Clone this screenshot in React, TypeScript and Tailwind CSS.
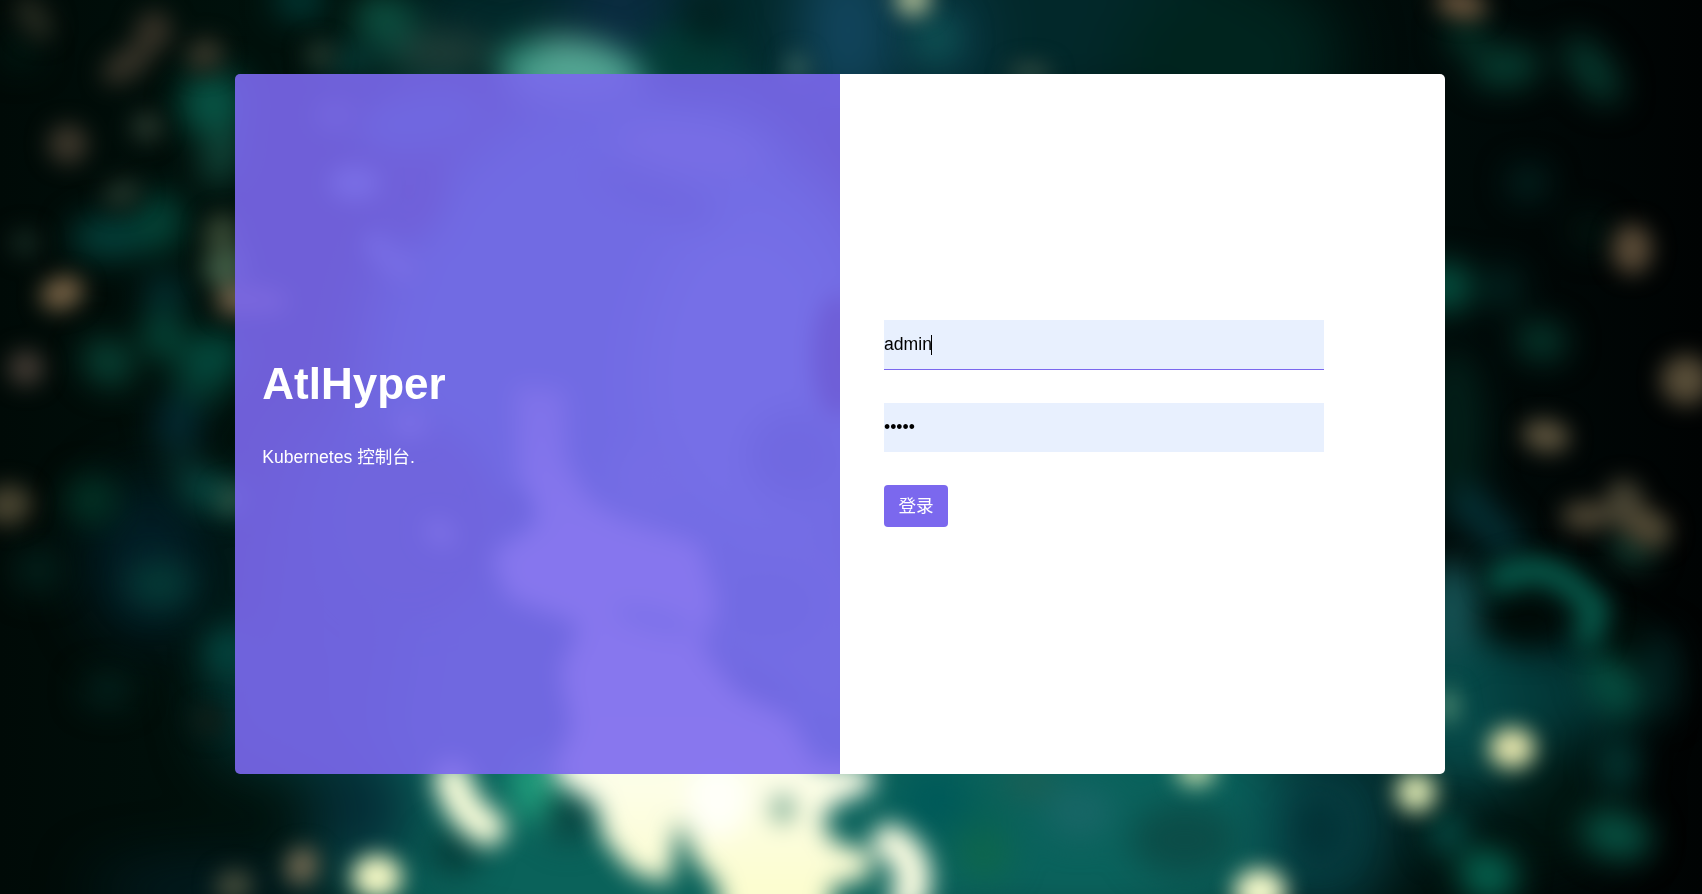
type Blob = [cx: number, cy: number, rx: number, ry: number, rotate: number, fill: string];

// Broad washes of colour that sit furthest back.
const washes: Blob[] = [
  [850, 20, 460, 110, 0, "#02282a"],
  [1230, 60, 110, 90, 0, "#00241e"],
  [620, 10, 55, 60, 0, "#0b2c42"],
  [848, 30, 48, 90, 0, "#12465f"],
  [950, 40, 30, 70, 0, "#0a3a48"],
  [150, 560, 60, 80, 0, "#021f28"],
  [630, 400, 270, 320, 0, "#18827c"],
  [770, 340, 120, 180, 0, "#309c92"],
  [740, 380, 100, 150, 0, "#4cb0a4"],
  [520, 720, 230, 180, 0, "#0b6460"],
  [800, 650, 100, 130, 0, "#38988a"],
  [330, 600, 70, 190, 0, "#043c3c"],
  [260, 700, 50, 70, 0, "#043838"],
  [700, 860, 390, 110, 0, "#0a625a"],
  [1080, 820, 270, 120, 0, "#0a625c"],
  [1330, 830, 70, 90, 0, "#063e42"],
  [1470, 700, 90, 100, 0, "#064a49"],
  [1560, 690, 75, 50, 10, "#033a3a"],
  [365, 810, 50, 60, 0, "#042c36"],
  [220, 890, 130, 22, 0, "#022028"],
  [1450, 880, 80, 28, 0, "#001511"],
  [1560, 810, 60, 60, 0, "#001510"],
];

// Medium foliage clumps.
const clumps: Blob[] = [
  [112, 237, 42, 22, 0, "#03403a"],
  [160, 222, 24, 30, 0, "#034437"],
  [213, 104, 34, 34, 0, "#075344"],
  [222, 155, 20, 32, 20, "#104438"],
  [386, 20, 34, 24, 15, "#0c5040"],
  [402, 50, 18, 24, 0, "#0b453b"],
  [350, 62, 32, 18, 0, "#063a36"],
  [300, 0, 26, 18, 0, "#003d39"],
  [445, 52, 46, 20, 0, "#203f39"],
  [108, 362, 27, 22, 35, "#084436"],
  [163, 336, 23, 24, 0, "#054537"],
  [212, 358, 32, 24, -20, "#034e40"],
  [200, 385, 30, 18, 0, "#043c32"],
  [178, 424, 24, 24, 0, "#032a34"],
  [182, 462, 16, 28, -20, "#052827"],
  [212, 492, 34, 17, 15, "#094f47"],
  [92, 500, 26, 24, 0, "#023426"],
  [160, 584, 34, 24, 0, "#053a36"],
  [228, 652, 24, 24, 0, "#044841"],
  [38, 570, 26, 24, 0, "#021f1a"],
  [108, 690, 26, 16, 0, "#02241f"],
  [165, 293, 20, 18, 0, "#033436"],
  [20, 52, 20, 16, 0, "#011a13"],
  [566, 68, 66, 32, 5, "#52998a"],
  [522, 64, 26, 24, 0, "#257a68"],
  [690, 60, 50, 34, 0, "#023a34"],
  [706, 18, 20, 30, 0, "#01201f"],
  [936, 38, 24, 24, 0, "#0e5153"],
  [1466, 36, 20, 18, 0, "#053529"],
  [1506, 67, 36, 20, -5, "#063e31"],
  [1592, 70, 18, 40, -38, "#063c30"],
  [1528, 183, 20, 17, 0, "#022522"],
  [1446, 287, 26, 25, 0, "#055443"],
  [1502, 288, 20, 22, -30, "#022420"],
  [1541, 341, 26, 19, 10, "#053a2e"],
  [1590, 232, 20, 16, 30, "#021812"],
  [1455, 430, 30, 80, 0, "#021e18"],
  [1470, 506, 20, 20, 0, "#053439"],
  [1498, 535, 17, 30, -40, "#053439"],
  [1452, 610, 22, 50, 0, "#175456"],
  [1525, 618, 46, 30, 0, "#000a07"],
  [1625, 640, 24, 30, 0, "#000c08"],
  [1660, 675, 20, 44, 0, "#022220"],
  [1632, 548, 20, 15, 20, "#18503f"],
  [1612, 685, 22, 36, -35, "#065041"],
  [1618, 765, 18, 28, 0, "#033b36"],
  [1616, 835, 36, 23, 15, "#075444"],
  [1488, 875, 30, 26, 25, "#056450"],
  [1447, 832, 18, 22, 20, "#05564e"],
  [410, 520, 90, 100, 0, "#0a4744"],
  [410, 190, 32, 46, 0, "#0a1c1c"],
  [420, 120, 66, 32, -10, "#13625f"],
  [690, 148, 78, 28, 8, "#5b9c8e"],
  [655, 194, 66, 18, 22, "#0e5f5a"],
  [575, 80, 70, 24, 0, "#53a894"],
  [795, 455, 50, 46, 0, "#127068"],
  [650, 480, 38, 36, 0, "#459e90"],
  [770, 605, 50, 38, 0, "#1f8278"],
  [745, 690, 54, 24, 20, "#126a64"],
  [815, 735, 26, 26, 0, "#17837a"],
  [536, 786, 26, 38, 0, "#22a07e"],
  [568, 815, 22, 26, 0, "#0a413e"],
  [975, 822, 34, 36, 0, "#086056"],
  [935, 800, 34, 32, 0, "#005a59"],
  [1080, 812, 34, 26, 0, "#186666"],
  [985, 855, 26, 24, 0, "#0e664c"],
  [1030, 782, 28, 16, 0, "#1e5f54"],
  [1185, 840, 54, 38, 0, "#0b4d48"],
  [1320, 830, 24, 34, 0, "#023236"],
  [455, 853, 26, 22, 0, "#053a37"],
];

// Small, brighter leaves and lights.
const lights: Blob[] = [
  [34, 18, 16, 26, -35, "#20261d"],
  [153, 32, 19, 22, 20, "#322f25"],
  [128, 63, 30, 16, -35, "#323026"],
  [205, 55, 19, 17, -25, "#343428"],
  [68, 144, 20, 20, 20, "#3b362b"],
  [147, 127, 16, 15, 0, "#25352b"],
  [122, 194, 20, 14, -20, "#1f3228"],
  [226, 266, 24, 20, -25, "#3d5a44"],
  [222, 235, 18, 22, 10, "#344632"],
  [62, 293, 22, 16, -20, "#786346"],
  [234, 300, 18, 16, 0, "#6c5e44"],
  [25, 243, 16, 14, 0, "#12251e"],
  [26, 368, 18, 18, 30, "#413a33"],
  [8, 505, 24, 20, -10, "#474330"],
  [232, 500, 14, 15, 0, "#2c5445"],
  [208, 720, 16, 14, 0, "#0f1d17"],
  [302, 866, 16, 19, 20, "#746a52"],
  [234, 886, 19, 16, -15, "#434b3a"],
  [377, 877, 25, 22, 0, "#f7fac6"],
  [913, -2, 18, 18, 0, "#aab993"],
  [1030, 73, 22, 10, 0, "#2f4a41"],
  [797, 68, 11, 14, 0, "#35605c"],
  [320, 55, 15, 13, 0, "#233429"],
  [1461, 4, 26, 14, 12, "#6b563d"],
  [1632, 249, 20, 25, 0, "#594b37"],
  [1686, 380, 25, 25, 0, "#574d38"],
  [1546, 436, 24, 16, 10, "#5d543e"],
  [1586, 516, 25, 15, 0, "#4c4533"],
  [1625, 506, 20, 27, -10, "#454232"],
  [1648, 528, 24, 19, 25, "#4f4733"],
  [1512, 748, 23, 20, 0, "#e8e7ad"],
  [1416, 792, 20, 20, 0, "#dde8b2"],
  [1196, 770, 20, 16, 0, "#b9d5a8"],
  [1260, 892, 26, 23, 0, "#f5facb"],
  [1448, 706, 10, 18, 0, "#4f8a72"],
  [355, 183, 26, 18, 0, "#6a9f90"],
  [378, 247, 16, 11, 38, "#5d9a8b"],
  [398, 265, 22, 12, 25, "#5d9a8b"],
  [335, 115, 22, 18, 0, "#2f4c44"],
  [255, 300, 34, 14, 4, "#715f49"],
  [410, 424, 18, 15, 0, "#6fa193"],
  [440, 533, 18, 14, 38, "#7aa58f"],
  [838, 356, 26, 62, 0, "#000806"],
  [505, 508, 20, 16, 0, "#0b504c"],
];

function Layer({ blobs, blur }: { blobs: Blob[]; blur: string }) {
  return (
    <g filter={`url(#${blur})`}>
      {blobs.map(([cx, cy, rx, ry, rotate, fill], i) => (
        <ellipse key={i} cx={cx} cy={cy} rx={rx} ry={ry} fill={fill} transform={`rotate(${rotate} ${cx} ${cy})`} />
      ))}
    </g>
  );
}

function Backdrop() {
  return (
    <svg className="absolute inset-0 h-full w-full" viewBox="0 0 1702 894" preserveAspectRatio="xMidYMid slice" aria-hidden="true">
      <defs>
        {[
          ["wash", 30],
          ["clump", 16],
          ["light", 11],
          ["glare", 12],
        ].map(([id, deviation]) => (
          <filter key={id} id={String(id)} filterUnits="userSpaceOnUse" x="-100" y="-100" width="1902" height="1094" colorInterpolationFilters="sRGB">
            <feGaussianBlur stdDeviation={deviation} />
          </filter>
        ))}
        <linearGradient id="night" x1="0" x2="1">
          <stop offset="0" stopColor="#000a07" />
          <stop offset="0.15" stopColor="#00110c" />
          <stop offset="0.8" stopColor="#000d0b" />
          <stop offset="1" stopColor="#000303" />
        </linearGradient>
        <linearGradient id="glow" x1="0" x2="0" y1="395" y2="894" gradientUnits="userSpaceOnUse">
          <stop offset="0" stopColor="#a0ccb8" />
          <stop offset="0.25" stopColor="#e4f4e4" />
          <stop offset="0.78" stopColor="#fdfee8" />
          <stop offset="1" stopColor="#fcfdce" />
        </linearGradient>
      </defs>
      <rect width="1702" height="894" fill="url(#night)" />
      <Layer blobs={washes} blur="wash" />
      <Layer blobs={clumps} blur="clump" />
      <g filter="url(#glare)" fill="none" strokeLinecap="round" strokeLinejoin="round">
        <path d="M1500 578 Q1540 560 1570 584 L1596 608 L1588 634" stroke="#06594a" strokeWidth="28" />
      </g>
      <g filter="url(#glare)">
        <path
          d="M515 385 L565 390 L566 460 L590 500 L621 518 L700 543 L718 605 L702 648 L737 693 L790 719 L815 763 L872 768 L872 790 L836 804 L822 820 L834 842 L870 852 L870 878 L832 886 L826 960 L728 960 L718 885 L696 862 L678 820 L670 884 L632 872 L604 840 L596 805 L550 776 L572 726 L560 672 L580 624 L508 598 L492 556 L540 520 L519 476 Z"
          fill="url(#glow)"
        />
        <path d="M890 842 Q924 862 908 900" fill="none" stroke="#ffffe4" strokeWidth="36" strokeLinecap="round" />
        <path d="M452 778 Q460 812 488 828" fill="none" stroke="#fcffdc" strokeWidth="36" strokeLinecap="round" />
        <ellipse cx="718" cy="800" rx="30" ry="38" fill="#ffffff" fillOpacity="0.75" />
        <ellipse cx="783" cy="809" rx="11" ry="14" fill="#70a48e" />
        <ellipse cx="655" cy="620" rx="44" ry="11" fill="#80bfb2" transform="rotate(15 655 620)" />
      </g>
      <Layer blobs={lights} blur="light" />
    </svg>
  );
}

export default function App() {
  return (
    <main className="relative flex h-screen w-full justify-center overflow-hidden bg-black pt-[74px] pr-[22px] font-['Liberation_Sans','Noto_Sans_CJK_SC',sans-serif] text-[17.6px]">
      <Backdrop />
      <div className="relative flex h-[700px] w-[1210px] overflow-hidden rounded-[5px]">
        <section className="flex w-1/2 flex-col justify-center bg-[#7b68ee]/90 px-[27.3px] pb-5 text-white">
          <h1 className="text-[44px] leading-[50px] font-bold">AtlHyper</h1>
          <p className="mt-[35px] leading-[26px]">Kubernetes 控制台.</p>
        </section>
        <section className="flex w-1/2 flex-col justify-center bg-white pb-px pl-11">
          <form className="flex w-[440px] flex-col items-start" onSubmit={(e) => e.preventDefault()}>
            <div className="flex h-[50px] w-full items-center border-b border-[#7b68ee] bg-[#e8f0fe] text-black">
              <span>admin</span>
              <span className="-ml-px h-5 w-px bg-black" />
            </div>
            <div className="mt-[33px] flex h-[50px] w-full items-center border-b border-white bg-[#e8f0fe] text-black">
              <span>•••••</span>
            </div>
            <button type="submit" className="mt-8 h-[42px] w-16 rounded-[4px] bg-[#7b68ee] text-white">
              登录
            </button>
          </form>
        </section>
      </div>
    </main>
  );
}
